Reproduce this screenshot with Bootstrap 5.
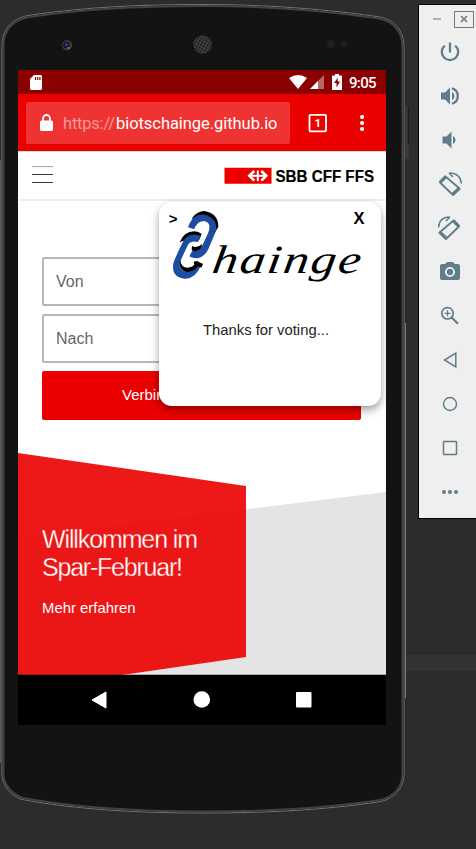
<!DOCTYPE html>
<html lang="de">
<head>
<meta charset="utf-8">
<meta name="viewport" content="width=device-width, initial-scale=1">
<title>SBB Chainge</title>
<link href="https://cdn.jsdelivr.net/npm/bootstrap@5.3.0/dist/css/bootstrap.min.css" rel="stylesheet">
<style>
body{background:#2c2c2c;font-family:"Liberation Sans",Arial,sans-serif;width:476px;height:849px;overflow:hidden}
svg{display:block;flex:none}
svg text{white-space:pre}
.desk{height:849px}
.phone{width:418px}
.shell{left:0;top:0}
.screen{width:368px;height:655px;margin:70px 0 0 18px;background:#fff}
.statusbar{height:24px;background:#8b0000;color:#fff;padding:0 9px 0 12px}
.battery,.clock{margin-left:7px}
.urlbar{height:57px;background:#eb0000;padding:8px 18px 7px 8px}
.urlbox{width:264px;height:42px;background:#ef3333;border-radius:2px;padding-left:14px}
.address{margin-left:9px}
.tabs{margin-left:18px}
.dots{margin-right:4px}
.site{height:50px;padding:0 3px 0 14px;border-top:1px solid #ddd;border-bottom:2px solid #eee}
.search{padding:56px 25px 0 24px;gap:8px}
.field{height:49px;border:2px solid #b7b7b7;border-radius:2px;padding:0 12px;font-size:16px;color:#666;background:#fff}
.field::placeholder{color:#666}
.go{height:49px;background:#eb0000;border:0;border-radius:2px;font-size:15px;color:#fff;padding:0 0 0 80px;text-align:left}
.hero{height:222px;margin-top:33px}
.copy{padding:72px 0 0 24px}
.navkeys{height:51px;background:#000;padding:0 73px 1px}
.popup-card{left:141px;top:132px;width:222px;height:204px;border-radius:13px;background:#fff;box-shadow:0 4px 9px rgba(0,0,0,.38);z-index:3}
.tools{width:58px;height:515px;margin-top:4px;background:#efefef;border:solid #000;border-width:1px 0 1px 1px;color:#5f7d8b}
.wintools{height:26px;padding-top:5px}
.keys{gap:20.05px;padding:9px 0 0 5px}
.strip{left:406px;top:655px;width:70px;height:16px;background:#333}
</style>
<script src="https://cdn.jsdelivr.net/npm/bootstrap@5.3.0/dist/js/bootstrap.bundle.min.js"></script>
</head>
<body>
<div class="strip position-absolute"></div>
<div class="desk d-flex align-items-start position-relative">
<div class="phone position-relative">
<svg class="shell position-absolute" width="418" height="849" viewBox="0 0 418 849">
<path d="M405 107h3v38l1 1v12l-1 1h-3z" fill="#3a3a3a"/><path d="M408.3 108v36" stroke="#1a1a1a"/>
<path d="M.5 160v603" stroke="#5c5c5c"/><path d="M405.5 323v375" stroke="#777"/>
<path d="M2 46C2 30 11 19 28 15.500C88 6.500 145 4.500 203 4.500C262 4.500 322 8.500 380 17C395 20 404 31 404 47V774C404 788 395 798 381 801.500C322 810.500 262 813 203 813C140 813 80 810 22 799.500C10 795 2 785 2 774Z" fill="#131313" stroke="#747474"/>
<path d="M3.500 46C3.500 31 12 20.500 29 17C88 8 145 6 203 6C262 6 322 10 379 18.500C394 21.500 402.500 32 402.500 47V774C402.500 787 394 796.500 380 800C322 809 262 811.500 203 811.500C140 811.500 80 808.500 23 798C11 793.500 3.500 784 3.500 774Z" fill="none" stroke="#424242" stroke-width="2"/>
<circle cx="67" cy="45.300" r="5" fill="#444"/><circle cx="66.500" cy="45" r="3.600" fill="#171728"/><circle cx="66.500" cy="44.600" r="1.700" fill="#3535a8"/><circle cx="68.500" cy="48" r="1" fill="#888"/>
<defs><pattern id="mesh" width="3" height="3" patternUnits="userSpaceOnUse" patternTransform="rotate(30)"><rect width="3" height="3" fill="#4a4a4a"/><circle cx="1.500" cy="1.500" r="1.150" fill="#161616"/></pattern></defs>
<circle cx="202.700" cy="44.500" r="9.300" fill="url(#mesh)"/>
<circle cx="331" cy="44" r="4" fill="#1e1e1e"/><circle cx="344" cy="44" r="3" fill="#1d1d1d"/>
</svg>
<div class="screen position-relative overflow-hidden">
<div class="statusbar d-flex align-items-center">
<svg width="12" height="15" viewBox="0 0 12 15"><path d="M4 0h7l1 1v13l-1 1H1l-1-1V4z" fill="#fff"/><path d="M5.500 2v3M7.700 2v3M9.900 2v3" stroke="#8b0000" stroke-width="1.200"/></svg>
<div class="d-flex align-items-center ms-auto">
<svg width="18" height="14" viewBox="0 0 18 14"><path d="M0 3Q9-3 18 3L9 14z" fill="#fff"/></svg>
<svg width="18" height="14" viewBox="-2 0 18 14"><path d="M15 0v14H1z" fill="#b96666"/><path d="M9 6v8H1z" fill="#fff"/></svg>
<svg class="battery" width="10" height="16" viewBox="0 0 10 16"><path d="M3 0h4v1.500h3V16H0V1.500h3z" fill="#fff"/><path d="M6 3.500L2 9h2.500v4.500L8 7.500H5.500z" fill="#8b0000"/></svg>
<svg class="clock" width="28" height="20"><text x="0" y="15.500" fill="#fff" font-family="Roboto" font-weight="500" font-size="15" textLength="27.500">9:05</text></svg>
</div></div>
<div class="urlbar d-flex align-items-center">
<div class="urlbox d-flex align-items-center">
<svg width="13" height="18" viewBox="0 0 13 18"><path d="M3 8V4.500a3.500 3.500 0 0 1 7 0V8" fill="none" stroke="#fff" stroke-width="1.800"/><rect y="6.500" width="13" height="10.500" rx="1.500" fill="#fff"/></svg>
<svg class="address" width="220" height="30" font-family="Roboto" font-size="16.500"><text x="1" y="21" fill="#f79999" textLength="52">https://</text><text x="54" y="21" fill="#fff" textLength="161.500">biotschainge.github.io</text></svg>
</div>
<svg class="tabs" width="20" height="20" viewBox="0 0 20 20"><rect x="1.500" y="1.800" width="16.500" height="16.500" rx="1" fill="none" stroke="#fff" stroke-width="1.800"/><text x="9.700" y="14.200" text-anchor="middle" fill="#fff" font-family="Roboto" font-weight="700" font-size="11.500">1</text></svg>
<svg class="dots ms-auto" width="4.200" height="18" fill="#fff"><circle cx="2.100" cy="3" r="2.100"/><circle cx="2.100" cy="9" r="2.100"/><circle cx="2.100" cy="15" r="2.100"/></svg>
</div>
<div class="site d-flex align-items-center justify-content-between">
<svg width="21" height="20" viewBox="0 0 21 20"><path d="M0 .5h21" stroke="#aaa" stroke-width="1.200"/><path d="M0 8.500h21M0 16.500h21" stroke="#333" stroke-width="1.200"/></svg>
<svg width="160" height="24" viewBox="0 -2 160 24"><path d="M1.500 1.800h47v16h-47z" fill="#eb0000"/><path d="M26.500 9.800h16.500" stroke="#fff" stroke-width="2"/><path d="M34.800 4.500v10.600" stroke="#fff" stroke-width="2"/><path d="M31.300 5l-5 4.800l5 4.800M38.300 5l5 4.800l-5 4.800" fill="none" stroke="#fff" stroke-width="2.600"/><text x="52.500" y="16" font-size="16" font-weight="700" fill="#000" stroke="#000" stroke-width=".2" textLength="98.500" lengthAdjust="spacingAndGlyphs">SBB CFF FFS</text></svg>
</div>
<form class="search d-flex flex-column">
<input class="field w-100" placeholder="Von" aria-label="Von">
<input class="field w-100" placeholder="Nach" aria-label="Nach">
<button type="button" class="go w-100">Verbindung suchen</button>
</form>
<div class="hero position-relative">
<svg class="position-absolute top-0 start-0" width="368" height="222"><path d="M0 84L368 39V222H0z" fill="#e4e4e4"/><path d="M0 0L228 33V204L104 222H0z" fill="#eb0000" fill-opacity=".9"/><path d="M0 221.500h368" stroke="#000" stroke-opacity=".25"/></svg>
<div class="copy position-relative">
<svg width="190" height="96" fill="#fff"><g font-size="25" stroke="#ea1616" stroke-width=".3"><text x="0" y="22.500" textLength="156">Willkommen im</text><text x="0" y="51" textLength="141">Spar-Februar!</text></g><text x="0" y="88" font-size="15" textLength="93.500" lengthAdjust="spacingAndGlyphs">Mehr erfahren</text></svg>
</div></div>
<div class="navkeys d-flex align-items-center justify-content-between">
<svg width="16" height="18"><path d="M15 1v16L1 9z" fill="#fff" stroke="#fff" stroke-linejoin="round"/></svg>
<svg width="18" height="18"><circle cx="8.800" cy="8.500" r="8.300" fill="#fff"/></svg>
<svg width="17" height="17"><rect x="0" y="0" width="15.500" height="15.500" rx="1" fill="#fff"/></svg>
</div>
<div class="popup-card position-absolute">
<svg width="222" height="204" viewBox="0 0 222 204">
<text x="9.800" y="21.500" font-size="15" font-weight="700" fill="#000">&gt;</text>
<text x="194.500" y="22" font-size="16" font-weight="700" fill="#000" textLength="11" lengthAdjust="spacingAndGlyphs">X</text>
<g transform="translate(6 3) scale(.33333)">
<path d="M82 38Q98 18 117 18Q160 24 160 65L146 90L84 60Z" fill="#000"/>
<path d="M69 67Q77 42 93 34Q108 24 128 32Q155 43 154 72Q148 92 135 120Q122 159 92 160Q79 159 73 154L83 135Q101 143 109 127L132 77Q139 52 117 48Q96 48 88 73Z" fill="#1d4da1"/>
<path d="M117 48Q96 48 88 73L82 122L97 133L109 127L132 77Q139 52 117 48Z" fill="#fff"/>
<path d="M81 123Q94 132 112 117L109 129Q98 145 80 135Z" fill="#000"/>
<path d="M44 112Q57 79 88 79Q101 80 110 87L102 106L80 98Z" fill="#000"/>
<path d="M107 93Q82 82 64 97Q54 105 26 171Q16 216 59 221Q91 223 108 181L90 174Q78 205 54 197Q38 188 48 164L69 119Q78 106 99 111Z" fill="#1d4da1"/>
<path d="M45 164Q48 187 68 188Q82 187 88 180L86 170L96 168L114 177L109 188L98 184Q88 200 67 201Q39 196 45 164Z" fill="#000"/>
</g>
<text transform="translate(52 70.500) skewX(-8) scale(1.28 1)" x="0" y="0" font-family="'Liberation Serif',serif" font-style="italic" font-size="40" fill="#000" textLength="116">hainge</text>
<text x="44" y="133" font-size="15" fill="#222" textLength="126" lengthAdjust="spacingAndGlyphs">Thanks for voting...</text>
</svg></div>
</div></div>
<div class="tools">
<div class="wintools d-flex"><svg width="57" height="18"><path d="M14 9h8" stroke="#a3b4bc" stroke-width="2"/><path d="M42 6l6 6M48 6l-6 6" stroke="#5f7d8b" stroke-width="1.600"/><path d="M35.500 1.500h19v16h-19z" fill="none" stroke="#000" stroke-dasharray="1 1"/></svg></div>
<div class="keys d-flex flex-column align-items-center">
<svg width="24" height="24" fill="none" stroke="currentColor" stroke-width="2.300"><path d="M12 2.500v10M6.800 5.600a8.200 8.200 0 1 0 10.400 0"/></svg>
<svg width="24" height="24" fill="currentColor"><path d="M3 8.500v7h4l5 5V3.500l-5 5H3zm13.500 3.500c0-1.770-1.020-3.290-2.500-4.030v8.050c1.480-.73 2.500-2.250 2.500-4.020z"/><path d="M14 4.300a8 8 0 0 1 0 15.400" fill="none" stroke="currentColor" stroke-width="2.300"/></svg>
<svg width="24" height="24" fill="currentColor"><path d="M17.500 12c0-1.770-1.020-3.290-2.500-4.030v8.050c1.480-.73 2.500-2.250 2.500-4.020zM4.500 8.500v7h4l5 5V3.500l-5 5z"/></svg>
<svg width="24" height="24" fill="none" stroke="currentColor" stroke-width="1.800"><path d="M7.500 4.500L2 10.500L15 23L21.500 16.500z" stroke-linejoin="round"/><path d="M2 10.500l6-6M14.500 22.500l7-6.500" stroke-width="3.200"/><path d="M11 1Q22.500 1 23.300 11.500M11 1l4 4" stroke-width="1.500"/></svg>
<svg width="24" height="24" fill="none" stroke="currentColor" stroke-width="1.800"><g transform="matrix(-1 0 0 1 23 0)"><path d="M7.500 4.500L2 10.500L15 23L21.500 16.500z" stroke-linejoin="round"/><path d="M2 10.500l6-6M14.500 22.500l7-6.500" stroke-width="3.200"/><path d="M11 1Q22 1 22.500 11.500M11 1l4 4" stroke-width="1.500"/></g></svg>
<svg width="24" height="24" fill="currentColor"><path d="M9 2L7.200 4H4a2 2 0 0 0-2 2v12a2 2 0 0 0 2 2h16a2 2 0 0 0 2-2V6a2 2 0 0 0-2-2h-3.200L15 2z"/><circle cx="12" cy="12" r="4.100" stroke="#efefef" stroke-width="1.900"/></svg>
<svg width="24" height="24" fill="none" stroke="currentColor"><circle cx="9.500" cy="9.300" r="5.700" stroke-width="1.700"/><path d="M6.500 9.300h6M9.500 6.300v6" stroke-width="1.200"/><path d="M13.500 13.300L20 19.800" stroke-width="2.200"/></svg>
<svg width="24" height="24" fill="none" stroke="currentColor" stroke-width="1.500"><path d="M17.800 5.200v13.600L6.500 12z"/></svg>
<svg width="24" height="24" fill="none" stroke="currentColor" stroke-width="1.400"><circle cx="12" cy="12" r="6.500"/></svg>
<svg width="24" height="24" fill="none" stroke="currentColor" stroke-width="1.500"><rect x="5.500" y="5.500" width="13" height="13" rx=".5"/></svg>
<svg width="24" height="24" fill="currentColor"><circle cx="6" cy="12" r="2"/><circle cx="12" cy="12" r="2"/><circle cx="18" cy="12" r="2"/></svg>
</div></div>
</div>
</body>
</html>
